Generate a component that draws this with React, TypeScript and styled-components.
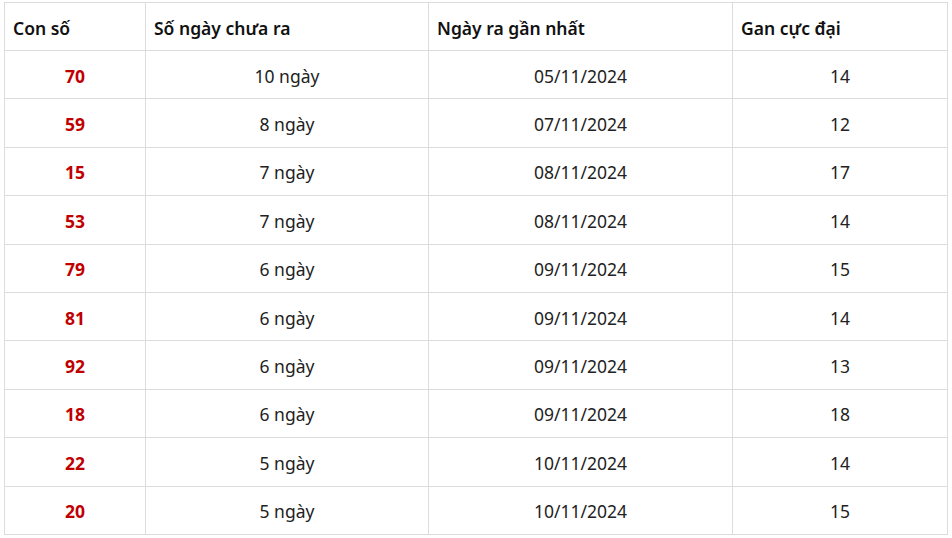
import React from 'react'
import styled, { createGlobalStyle } from 'styled-components'

const GlobalStyle = createGlobalStyle`
  body {
    margin: 0;
    background: #fff;
    font-family: "Noto Sans", "Open Sans", Arial, sans-serif;
  }
`

const Wrap = styled.div`
  padding: 2px 5px 0 4px;
`

const Table = styled.table`
  width: 943px;
  border-collapse: collapse;
  table-layout: fixed;
  font-size: 17.5px;
  color: #222;
`

const Col = styled.col<{ $w: number }>`
  width: ${({ $w }) => $w}px;
`

const HeadCell = styled.th`
  height: 45px;
  padding: 2px 8px 0;
  text-align: left;
  font-weight: 600;
  color: #111;
  border: 1px solid #dcdcdc;
  vertical-align: middle;
`

const Cell = styled.td<{ $hot?: boolean }>`
  height: 45.4px;
  padding: 2px 8px 0;
  text-align: center;
  border: 1px solid #dcdcdc;
  vertical-align: middle;
  font-weight: ${({ $hot }) => ($hot ? 700 : 400)};
  color: ${({ $hot }) => ($hot ? '#c00000' : '#222')};
`

const columns = [
  { label: 'Con số', w: 141 },
  { label: 'Số ngày chưa ra', w: 283 },
  { label: 'Ngày ra gần nhất', w: 304 },
  { label: 'Gan cực đại', w: 215 },
]

const rows = [
  ['70', '10 ngày', '05/11/2024', '14'],
  ['59', '8 ngày', '07/11/2024', '12'],
  ['15', '7 ngày', '08/11/2024', '17'],
  ['53', '7 ngày', '08/11/2024', '14'],
  ['79', '6 ngày', '09/11/2024', '15'],
  ['81', '6 ngày', '09/11/2024', '14'],
  ['92', '6 ngày', '09/11/2024', '13'],
  ['18', '6 ngày', '09/11/2024', '18'],
  ['22', '5 ngày', '10/11/2024', '14'],
  ['20', '5 ngày', '10/11/2024', '15'],
]

const App = () => {
  return (
    <Wrap>
      <GlobalStyle />
      <Table>
        <colgroup>
          {columns.map((c) => (
            <Col key={c.label} $w={c.w} />
          ))}
        </colgroup>
        <thead>
          <tr>
            {columns.map((c) => (
              <HeadCell key={c.label}>{c.label}</HeadCell>
            ))}
          </tr>
        </thead>
        <tbody>
          {rows.map((r) => (
            <tr key={r[0]}>
              <Cell $hot>{r[0]}</Cell>
              <Cell>{r[1]}</Cell>
              <Cell>{r[2]}</Cell>
              <Cell>{r[3]}</Cell>
            </tr>
          ))}
        </tbody>
      </Table>
    </Wrap>
  )
}

export default App
